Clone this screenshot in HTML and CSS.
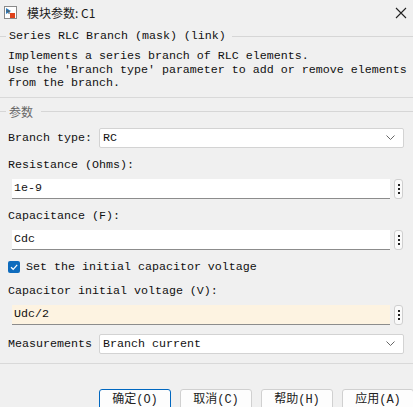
FILE: index.html
```html
<!DOCTYPE html>
<html>
<head>
<meta charset="utf-8">
<link rel="stylesheet" href="styles.css">
</head>
<body>
<div class="window">
  <div class="titlebar">
    <svg class="app-icon" width="13" height="13" viewBox="0 0 13 13">
      <rect x="0.5" y="0.5" width="12" height="12" fill="#fff" stroke="#8a8a8a"/>
      <path d="M2 2 L2 8 L7 5 Z" fill="#2b7fc2"/>
      <path d="M2 5 L5 5 L5 8" fill="none" stroke="#555" stroke-width="1"/>
      <rect x="6" y="7" width="5" height="5" fill="#e0421b"/>
    </svg>
    <span class="title">模块参数: C1</span>
    <svg class="close" width="12" height="12" viewBox="0 0 12 12">
      <path d="M1 1 L11 11 M11 1 L1 11" stroke="#222" stroke-width="1.1"/>
    </svg>
  </div>

  <div class="group-head"><span>Series RLC Branch (mask) (link)</span></div>
  <div class="desc">Implements a series branch of RLC elements.<br>Use the 'Branch type' parameter to add or remove elements<br>from the branch.</div>
  <div class="sep"></div>

  <div class="group-head params"><span>参数</span></div>

  <div class="row sel-row first">
    <span class="lbl">Branch type:</span>
    <div class="select"><span>RC</span><svg class="chev" width="9" height="5" viewBox="0 0 9 5"><path d="M0.5 0.5 L4.5 4.5 L8.5 0.5" fill="none" stroke="#666" stroke-width="1"/></svg></div>
  </div>

  <div class="lbl field-lbl">Resistance (Ohms):</div>
  <div class="field-row">
    <div class="input">1e-9</div>
    <div class="more"><i></i><i></i><i></i></div>
  </div>

  <div class="lbl field-lbl">Capacitance (F):</div>
  <div class="field-row">
    <div class="input">Cdc</div>
    <div class="more"><i></i><i></i><i></i></div>
  </div>

  <div class="check-row">
    <span class="checkbox"><svg width="12" height="12" viewBox="0 0 12 12"><path d="M3 6.2 L5.2 8.3 L9.2 3.8" fill="none" stroke="#fff" stroke-width="1.2"/></svg></span>
    <span class="lbl">Set the initial capacitor voltage</span>
  </div>

  <div class="lbl field-lbl">Capacitor initial voltage (V):</div>
  <div class="field-row">
    <div class="input warm">Udc/2</div>
    <div class="more"><i></i><i></i><i></i></div>
  </div>

  <div class="row sel-row meas">
    <span class="lbl">Measurements</span>
    <div class="select"><span>Branch current</span><svg class="chev" width="9" height="5" viewBox="0 0 9 5"><path d="M0.5 0.5 L4.5 4.5 L8.5 0.5" fill="none" stroke="#666" stroke-width="1"/></svg></div>
  </div>

  <div class="sep bottom"></div>

  <div class="buttons">
    <button class="btn primary">确定(O)</button>
    <button class="btn">取消(C)</button>
    <button class="btn">帮助(H)</button>
    <button class="btn">应用(A)</button>
  </div>
</div>
</body>
</html>
```

FILE: styles.css
```css
html, body {
  margin: 0;
  padding: 0;
  background: #f0f0f0;
}
.window {
  width: 413px;
  height: 407px;
  overflow: hidden;
  background: #f0f0f0;
  font-family: "Liberation Mono", "Noto Sans CJK SC", monospace;
  font-size: 11.67px;
  color: #111;
}
.titlebar {
  height: 25px;
  display: flex;
  align-items: center;
  padding-left: 4px;
  padding-right: 5px;
  font-family: "Noto Sans CJK SC", sans-serif;
  font-size: 12px;
  color: #1a1a1a;
}
.app-icon { flex: none; }
.title { margin-left: 10px; flex: 1; }
.close { flex: none; margin-right: 1px; }

.group-head {
  display: flex;
  align-items: center;
  height: 14px;
  margin-top: 4px;
  line-height: 14px;
}
.group-head::before {
  content: "";
  width: 6px;
  height: 1px;
  background: #d6d6d6;
  margin-right: 3px;
}
.group-head::after {
  content: "";
  flex: 1;
  height: 1px;
  background: #d6d6d6;
  margin-left: 6px;
}
.group-head.params {
  margin-top: 7px;
  color: #666;
  font-family: "Noto Sans CJK SC", sans-serif;
  font-size: 12px;
}
.group-head.params::after { margin-left: 8px; }

.desc {
  margin-top: 7px;
  padding-left: 8px;
  line-height: 13.5px;
  white-space: nowrap;
}
.sep {
  height: 1px;
  background: #d9d9d9;
  margin-top: 6px;
}
.sep.bottom { margin-top: 9px; }

.lbl { white-space: nowrap; line-height: 14px; }

.row {
  display: flex;
  align-items: center;
  padding-left: 8px;
}
.sel-row.first { margin-top: 9px; }
.sel-row.meas { margin-top: 9px; }
.sel-row .lbl { width: 91px; flex: none; }
.select {
  width: 292px;
  height: 18px;
  background: #fff;
  border: 1px solid #d3d3d3;
  border-radius: 2px;
  display: flex;
  align-items: center;
  justify-content: space-between;
  padding: 0 8px 0 3px;
  box-sizing: content-box;
}
.select span { line-height: 18px; }
.chev { flex: none; }

.field-lbl {
  padding-left: 8px;
  margin-top: 10px;
}
.field-row {
  display: flex;
  align-items: center;
  padding-left: 12px;
  margin-top: 7px;
}
.input {
  width: 378px;
  height: 20px;
  box-sizing: border-box;
  background: #fff;
  border-bottom: 1px solid #8c8c8c;
  padding: 0 2px;
  line-height: 19px;
  flex: none;
}
.input.warm { background: #fdf3e1; }
.more {
  width: 9px;
  height: 20px;
  box-sizing: border-box;
  margin-left: 4px;
  border: 1px solid #cfcfcf;
  border-radius: 3px;
  background: #fafafa;
  display: flex;
  flex-direction: column;
  align-items: center;
  justify-content: center;
  gap: 2px;
}
.more i {
  display: block;
  width: 2px;
  height: 2px;
  background: #222;
}

.check-row {
  display: flex;
  align-items: center;
  padding-left: 8px;
  margin-top: 10px;
}
.checkbox {
  width: 12px;
  height: 12px;
  border-radius: 2px;
  background: #0f6cbd;
  display: flex;
  margin-right: 6px;
}

.buttons {
  display: flex;
  gap: 9px;
  padding-left: 99px;
  margin-top: 25px;
}
.btn {
  flex: none;
  width: 72px;
  height: 23px;
  box-sizing: border-box;
  background: #fdfdfd;
  border: 1px solid #d0d0d0;
  border-radius: 3px;
  font-family: "Liberation Mono", "Noto Sans CJK SC", monospace;
  font-size: 12px;
  color: #222;
  padding: 0;
  line-height: 20px;
}
.btn.primary {
  border: 1.5px solid #0067c0;
}
```
